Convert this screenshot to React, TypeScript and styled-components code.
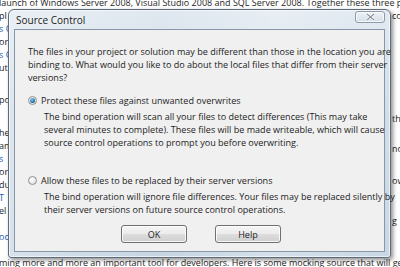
import React from 'react';
import styled, { createGlobalStyle } from 'styled-components';

const GlobalStyle = createGlobalStyle`
  html, body {
    margin: 0;
    padding: 0;
    background: #ffffff;
    overflow: hidden;
  }
  #root {
    width: 400px;
    height: 267px;
  }
`;

type Line = { text: string; link?: boolean };

// blog page text that shows around the dialog
const backParas: { gap: number; lines: Line[] }[] = [
  {
    gap: 0,
    lines: [
      { text: 'launch of Windows Server 2008, Visual Studio 2008 and SQL Server 2008. Together these three products' },
      { text: 'pl' },
      { text: 's C', link: true },
      { text: 'or' },
      { text: 's C', link: true },
      { text: 'ut' },
    ],
  },
  { gap: 19, lines: [{ text: 'po' }] },
  {
    gap: 20,
    lines: [
      { text: 'he' },
      { text: 'am' },
      { text: 's', link: true },
      { text: 'or' },
      { text: 'du' },
      { text: 'T', link: true },
      { text: 'el' },
      { text: '' },
      { text: 'oc', link: true },
      { text: '' },
      { text: 'ming more and more an important tool for developers. Here is some mocking source that will get you' },
    ],
  },
];

const rightBits: { text: string; top: number }[] = [
  { text: 'co', top: 9 },
  { text: 'th', top: 90 },
  { text: 'no', top: 17 },
  { text: 'ow', top: 19 },
  { text: 'g', top: 27 },
];

const Page = styled.div`
  position: relative;
  width: 400px;
  height: 267px;
  overflow: hidden;
  background: #ffffff;
  font-family: 'Open Sans', 'Liberation Sans', sans-serif;
`;

const BackText = styled.div`
  display: flex;
  flex-direction: column;
  margin-top: -4px;
  margin-left: -1px;
`;

const BackPara = styled.div<{ $gap: number }>`
  display: flex;
  flex-direction: column;
  margin-top: ${(p) => p.$gap}px;
`;

const BackLine = styled.div<{ $link?: boolean }>`
  height: 13px;
  line-height: 13px;
  font-size: 9px;
  white-space: nowrap;
  color: ${(p) => (p.$link ? '#2a5db0' : '#262626')};
`;

const RightText = styled.div`
  position: absolute;
  top: 0;
  left: 392px;
  display: flex;
  flex-direction: column;
`;

const RightBit = styled(BackLine)<{ $top: number }>`
  margin-top: ${(p) => p.$top}px;
`;

const Frame = styled.div`
  position: absolute;
  left: 8px;
  top: 9px;
  width: 383px;
  height: 249px;
  box-sizing: border-box;
  border: 1px solid #5d6b7a;
  border-radius: 6px 6px 3px 3px;
  background:
    linear-gradient(90deg, rgba(255,255,255,0.3), rgba(255,255,255,0) 40%, rgba(255,255,255,0.25) 70%, rgba(255,255,255,0.05)),
    linear-gradient(180deg, #e0e8f0 0%, #cfdce8 40%, #c6d5e3 100%);
  box-shadow: 2px 2px 4px rgba(0,0,0,0.45), inset 0 0 0 1px rgba(255,255,255,0.6);
  display: flex;
  flex-direction: column;
  padding: 0 5px 5px 5px;
`;

const TitleBar = styled.div`
  height: 19px;
  display: flex;
  align-items: flex-start;
  justify-content: space-between;
`;

const Title = styled.span`
  font-size: 10px;
  line-height: 12px;
  color: #1a1a1a;
  padding-left: 2px;
  padding-top: 4px;
  text-shadow: 0 0 6px rgba(255,255,255,0.9);
`;

const CloseButton = styled.div`
  width: 30px;
  height: 12px;
  margin-top: 1px;
  box-sizing: border-box;
  border: 1px solid #8d9aa8;
  border-radius: 3px;
  background: linear-gradient(180deg, #eef2f6, #d6dfe8);
  display: flex;
  align-items: center;
  justify-content: center;
  box-shadow: inset 0 0 0 1px rgba(255,255,255,0.7);
`;

const Client = styled.div`
  flex: 1;
  background: #f0f0f0;
  border: 1px solid #8797a8;
  display: flex;
  flex-direction: column;
  padding: 15px 6px 0 13px;
  font-size: 9.05px;
  line-height: 13px;
  color: #1c1c1c;
  white-space: nowrap;
`;

const Intro = styled.p`
  margin: 0;
`;

const Option = styled.div<{ $gap: number }>`
  display: flex;
  flex-direction: column;
  margin-top: ${(p) => p.$gap}px;
`;

const OptionRow = styled.label`
  display: flex;
  align-items: center;
  gap: 4px;
`;

const Radio = styled.span<{ $checked?: boolean }>`
  width: 9px;
  height: 9px;
  box-sizing: border-box;
  border-radius: 50%;
  border: 1px solid #8e8f8f;
  background: radial-gradient(circle at 40% 35%, #ffffff, #d8d8d8);
  display: flex;
  align-items: center;
  justify-content: center;
  flex-shrink: 0;

  &::after {
    content: '';
    display: ${(p) => (p.$checked ? 'block' : 'none')};
    width: 5px;
    height: 5px;
    border-radius: 50%;
    background: radial-gradient(circle at 40% 35%, #7fd0f5, #1a5f9e 70%);
  }
`;

const Desc = styled.p`
  margin: 3px 0 0 16px;
`;

const Buttons = styled.div`
  margin-top: auto;
  display: flex;
  justify-content: center;
  gap: 28px;
  padding-bottom: 8px;
  padding-right: 4px;
`;

const Button = styled.button`
  width: 66px;
  height: 18px;
  box-sizing: border-box;
  border: 1px solid #707070;
  border-radius: 3px;
  background: linear-gradient(180deg, #f6f6f6 0%, #ebebeb 50%, #dddddd 51%, #cfcfcf 100%);
  box-shadow: inset 0 0 0 1px rgba(255,255,255,0.8);
  font-family: 'Open Sans', 'Liberation Sans', sans-serif;
  font-size: 9.05px;
  color: #1c1c1c;
  padding: 0;
`;

const App: React.FC = () => {
  return (
    <Page>
      <GlobalStyle />
      <BackText>
        {backParas.map((p, i) => (
          <BackPara key={i} $gap={p.gap}>
            {p.lines.map((l, j) => (
              <BackLine key={j} $link={l.link}>
                {l.text}
              </BackLine>
            ))}
          </BackPara>
        ))}
      </BackText>
      <RightText>
        {rightBits.map((b, i) => (
          <RightBit key={i} $top={b.top}>
            {b.text}
          </RightBit>
        ))}
      </RightText>
      <Frame>
        <TitleBar>
          <Title>Source Control</Title>
          <CloseButton>
            <svg width="9" height="8" viewBox="0 0 9 8">
              <path d="M1 1 L8 7 M8 1 L1 7" stroke="#ffffff" strokeWidth="2.6" />
              <path d="M1 1 L8 7 M8 1 L1 7" stroke="#8a96a3" strokeWidth="1.2" />
            </svg>
          </CloseButton>
        </TitleBar>
        <Client>
          <Intro>
            The files in your project or solution may be different than those in the location you are
            <br />
            binding to. What would you like to do about the local files that differ from their server
            <br />
            versions?
          </Intro>
          <Option $gap={10}>
            <OptionRow>
              <Radio $checked />
              Protect these files against unwanted overwrites
            </OptionRow>
            <Desc>
              The bind operation will scan all your files to detect differences (This may take
              <br />
              several minutes to complete). These files will be made writeable, which will cause
              <br />
              source control operations to prompt you before overwriting.
            </Desc>
          </Option>
          <Option $gap={25}>
            <OptionRow>
              <Radio />
              Allow these files to be replaced by their server versions
            </OptionRow>
            <Desc>
              The bind operation will ignore file differences. Your files may be replaced silently by
              <br />
              their server versions on future source control operations.
            </Desc>
          </Option>
          <Buttons>
            <Button>OK</Button>
            <Button>Help</Button>
          </Buttons>
        </Client>
      </Frame>
    </Page>
  );
};

export default App;
